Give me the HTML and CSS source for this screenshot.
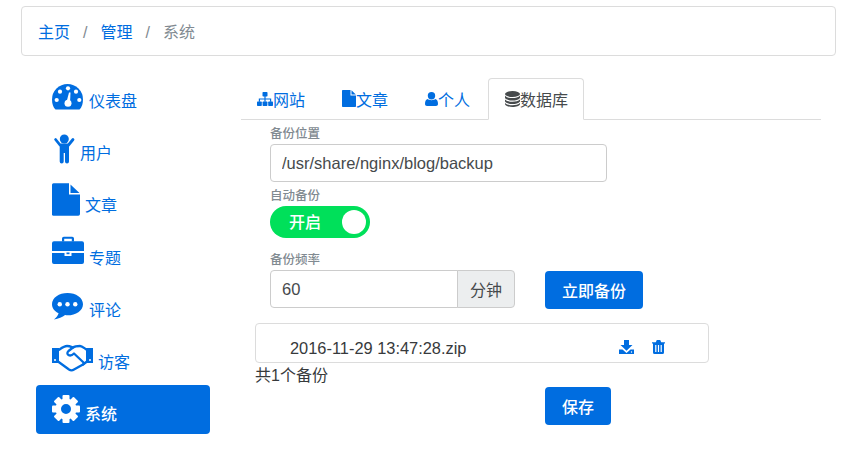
FILE: index.html
```html
<!DOCTYPE html>
<html lang="zh-CN">
<head>
<meta charset="utf-8">
<title>系统</title>
<link rel="stylesheet" href="styles.css">
</head>
<body>
<nav class="crumbs">
  <a href="#">主页</a><span class="sep">/</span><a href="#">管理</a><span class="sep">/</span><span class="current">系统</span>
</nav>
<div class="layout">
  <ul class="side">
    <li><a class="side-link" href="#">
      <svg class="ico w31" viewBox="0 0 31 36"><path d="M3.5 33.500C1.200 31.500 0 27.500 0 23.500A15.500 15.500 0 0 1 31 23.500C31 27.500 29.800 31.500 27.500 33.500Z"/><g fill="#fff"><circle cx="4.700" cy="24" r="2.100"/><circle cx="8" cy="15.700" r="2.100"/><circle cx="16" cy="12.300" r="2.100"/><circle cx="24" cy="15.700" r="2.100"/><circle cx="27.300" cy="24" r="2.100"/><circle cx="16" cy="27.300" r="3.500"/><path d="M14.400 26.500L17 16.500H18.500L18 27Z"/></g></svg>
      <span>仪表盘</span></a></li>
    <li><a class="side-link" href="#">
      <svg class="ico w22" viewBox="0 0 22 36"><circle cx="11.300" cy="11" r="4.500"/><path d="M2.600 11.500L7 17H15.500L20 11.500" fill="none" stroke="#006de0" stroke-width="2.800" stroke-linecap="round" stroke-linejoin="round"/><path d="M6.700 16H16V33.500A2 2 0 0 1 12 33.500V25H10.700V33.500A2 2 0 0 1 6.700 33.500Z"/></svg>
      <span>用户</span></a></li>
    <li><a class="side-link" href="#">
      <svg class="ico w28" viewBox="0 0 28 36"><path d="M1.500 3.300H17V14.500H28V34A1.700 1.700 0 0 1 26.300 35.700H1.500A1.500 1.500 0 0 1 0 34V4.800A1.500 1.500 0 0 1 1.500 3.300Z"/><path d="M18.500 4.500L27.500 13H18.500Z"/></svg>
      <span>文章</span></a></li>
    <li><a class="side-link" href="#">
      <svg class="ico w32" viewBox="0 0 32 36"><path d="M10 9.500V6.500A1.800 1.800 0 0 1 11.800 4.700H20.200A1.800 1.800 0 0 1 22 6.500V9.500H19.800V6.800H12.200V9.500Z"/><path d="M2 9.300H30A2 2 0 0 1 32 11.300V19H0V11.300A2 2 0 0 1 2 9.300Z"/><path d="M0 21H12.500V24H19.500V21H32V30A2 2 0 0 1 30 32H2A2 2 0 0 1 0 30Z"/><rect x="14.500" y="20.500" width="3" height="1.700"/></svg>
      <span>专题</span></a></li>
    <li><a class="side-link" href="#">
      <svg class="ico w31" viewBox="0 0 32 36"><path d="M16 8.700C7.300 8.700 0 13.700 0 20.300C0 24.300 2.500 27.500 6.800 29.500C6.300 31.700 4.500 34 2 36C6.500 35.500 11 33.500 13.500 31.500C14.300 31.700 15.200 31.800 16 31.800C24.700 31.800 32 26.800 32 20.300C32 13.700 24.700 8.700 16 8.700Z"/><g fill="#fff"><circle cx="8" cy="20.300" r="2.300"/><circle cx="16" cy="20.300" r="2.300"/><circle cx="24" cy="20.300" r="2.300"/></g></svg>
      <span>评论</span></a></li>
    <li><a class="side-link" href="#">
      <svg class="ico w41" viewBox="0 0 41 36"><rect x="0" y="12" width="7" height="15"/><rect x="34" y="12" width="7" height="15"/><circle cx="3" cy="24" r="1" fill="#fff"/><circle cx="38" cy="24" r="1" fill="#fff"/><g fill="none" stroke="#006de0" stroke-width="2.300" stroke-linejoin="round" stroke-linecap="round"><path d="M6 14.500C9 12.500 12 10 15 10C18 10 19.500 11 21 11.500C23 10 25.500 10 28 10C30 10 32 12 35 14"/><path d="M6 25.500L17 33.500C18.500 34.500 20.500 34.500 22 33.500L31 28.500L35 25.500"/><path d="M21 11.500L16.500 15C15 16.500 15 18 16.500 19C18 20 20 19.500 22 17.500L31 26C32 27 32 28 31 28.500"/></g></svg>
      <span>访客</span></a></li>
    <li><a class="side-link active" href="#">
      <svg class="ico w28 ico-white" viewBox="0 0 28 36"><path fill-rule="evenodd" d="M14 10.500A10.500 10.500 0 1 0 14 31.500A10.500 10.500 0 1 0 14 10.500ZM14 16A5 5 0 1 1 14 26A5 5 0 1 1 14 16Z"/><rect x="10.500" y="7" width="7" height="6" rx="1"/><rect x="10.500" y="29" width="7" height="6" rx="1"/><rect x="0" y="17.500" width="6" height="7" rx="1"/><rect x="22" y="17.500" width="6" height="7" rx="1"/><rect x="10.500" y="7" width="7" height="6" rx="1" transform="rotate(45 14 21)"/><rect x="10.500" y="7" width="7" height="6" rx="1" transform="rotate(135 14 21)"/><rect x="10.500" y="7" width="7" height="6" rx="1" transform="rotate(225 14 21)"/><rect x="10.500" y="7" width="7" height="6" rx="1" transform="rotate(315 14 21)"/></svg>
      <span>系统</span></a></li>
  </ul>
  <main class="content">
    <ul class="tabs">
      <li><a class="tab" href="#">
        <svg class="tab-ico w16" viewBox="0 0 16 16"><rect x="5.500" y="1" width="5" height="4.500" rx=".7"/><rect x="0" y="10.500" width="4.800" height="4.500" rx=".7"/><rect x="5.600" y="10.500" width="4.800" height="4.500" rx=".7"/><rect x="11.200" y="10.500" width="4.800" height="4.500" rx=".7"/><path d="M7.400 5H8.600V7.500H14.200V10.700H13V8.600H8.600V10.700H7.400V8.600H3V10.700H1.800V7.500H7.400Z"/></svg>网站</a></li>
      <li><a class="tab" href="#">
        <svg class="tab-ico w14" viewBox="0 0 14 17"><path d="M.8 0H8.500V5.500H14V16.200A.8.8 0 0 1 13.200 17H.8A.8.8 0 0 1 0 16.200V.8A.8.8 0 0 1 .8 0Z"/><path d="M9.500.3L13.800 4.500H9.500Z"/></svg>文章</a></li>
      <li class="tab-tight"><a class="tab" href="#">
        <svg class="tab-ico w13" viewBox="0 0 13 14"><circle cx="6.500" cy="3.700" r="3.700"/><path d="M2.500 7C4 8.500 9 8.500 10.500 7C12.300 7.500 13 9.500 13 12C13 13.200 12.200 14 11 14H2C.8 14 0 13.200 0 12C0 9.500 .7 7.500 2.500 7Z"/></svg>个人</a></li>
      <li><a class="tab tab-on" href="#">
        <svg class="tab-ico w15 ico-dark" viewBox="0 0 15 16"><ellipse cx="7.500" cy="3" rx="7.500" ry="3"/><path d="M0 4.700C1.500 6.500 4.500 7 7.500 7S13.500 6.500 15 4.700V7C13.500 9 10.500 9.500 7.500 9.500S1.500 9 0 7Z"/><path d="M0 8.500C1.500 10.200 4.500 10.700 7.500 10.700S13.500 10.200 15 8.500V10.500C13.500 12.500 10.500 13 7.500 13S1.500 12.500 0 10.500Z"/><path d="M0 12C1.500 13.700 4.500 14.200 7.500 14.200S13.500 13.700 15 12V13C15 14.800 11 16 7.500 16S0 14.800 0 13Z"/></svg>数据库</a></li>
    </ul>
    <form class="form">
      <div class="fields">
        <label class="lbl">备份位置</label>
        <input class="inp inp-path" type="text" value="/usr/share/nginx/blog/backup">
        <label class="lbl lbl-auto">自动备份</label>
        <div class="switch"><span class="switch-text">开启</span><span class="knob"></span></div>
        <label class="lbl lbl-freq">备份频率</label>
        <div class="freq">
          <div class="group"><input class="inp inp-num" type="text" value="60"><span class="addon">分钟</span></div>
          <button class="btn btn-now" type="button">立即备份</button>
        </div>
      </div>
      <div class="files">
        <span class="fname">2016-11-29 13:47:28.zip</span>
        <span class="file-actions">
          <svg class="act-dl" viewBox="0 0 15 14"><path d="M5 0H10V5H13.500L7.500 10.800L1.500 5H5Z"/><path d="M0 9.500H3.500L7.500 13L11.500 9.500H15V14H0Z"/><circle cx="12.500" cy="12" r=".7" fill="#fff"/></svg>
          <svg class="act-rm" viewBox="0 0 13 14"><path fill-rule="evenodd" d="M0 2.200H3.800L4.800 0H8.200L9.200 2.200H13V3.500H12V12.500A1.500 1.500 0 0 1 10.500 14H2.500A1.500 1.500 0 0 1 1 12.500V3.500H0ZM3.200 5V12H4.400V5ZM5.900 5V12H7.100V5ZM8.600 5V12H9.800V5Z"/></svg>
        </span>
      </div>
      <div class="count">共1个备份</div>
      <button class="btn btn-save" type="button">保存</button>
    </form>
  </main>
</div>
</body>
</html>
```
FILE: styles.css
```css
* { box-sizing: border-box; }
html, body { margin: 0; padding: 0; background: #fff; }
body {
  font-family: "Liberation Sans", "Noto Sans CJK SC", sans-serif;
  font-size: 16px;
  color: #373a3c;
}
a { color: #006de0; text-decoration: none; }
ul { list-style: none; margin: 0; padding: 0; }
svg { fill: #006de0; flex: none; display: block; }
.ico-white { fill: #fff; }
.ico-dark { fill: #464a4c; }

.crumbs {
  margin: 6px 23px 0 21px;
  height: 50px;
  padding: 0 16px;
  border: 1px solid #dcdcdc;
  border-radius: 4px;
  display: flex;
  align-items: center;
}
.sep { color: #818a91; padding: 4px 13px 0; }
.current { color: #818a91; }

.layout { display: flex; align-items: flex-start; margin: 17px 38px 0 36px; }
.side { width: 174px; flex: none; display: flex; flex-direction: column; gap: 3px; }
.side-link {
  display: flex;
  align-items: flex-end;
  height: 49px;
  padding: 0 16px 10px;
  border-radius: 4px;
  line-height: 20px;
}
.side li:nth-child(n+4) span { margin-bottom: -1px; }
.side-link.active { background: #006de0; color: #fff; font-weight: 500; }
.ico { height: 36px; margin-right: 5px; }
.w22 { width: 22px; margin-left: 1px; margin-right: 5px; }
.w28 { width: 28px; }
.w31 { width: 31px; margin-right: 6px; }
.w32 { width: 32px; }
.w41 { width: 41px; margin-right: 5px; }

.content { margin-left: 31px; flex: 1; margin-top: 5px; }
.tabs { display: flex; gap: 5px; height: 42px; border-bottom: 1px solid #dcdcdc; }
.tab {
  display: flex;
  align-items: center;
  height: 42px;
  padding: 0 15px 1px;
  border: 1px solid transparent;
  border-radius: 4px 4px 0 0;
}
.tab-tight { margin-right: -3px; }
.tab-on { color: #464a4c; background: #fff; border-color: #dcdcdc #dcdcdc #fff; padding: 0 15px 1px 16px; }
.w16 { width: 16px; height: 16px; }
.w14 { width: 14px; height: 17px; }
.w13 { width: 13px; height: 14px; }
.w15 { width: 15px; height: 16px; }

.form { margin-left: 14px; display: flex; flex-direction: column; align-items: flex-start; }
.fields { padding: 5px 0 0 15px; display: flex; flex-direction: column; align-items: flex-start; }
.lbl { display: block; font-size: 12.5px; font-weight: 500; line-height: 16px; padding-top: 1px; height: 16px; margin-bottom: 3px; color: #818a91; }
.lbl-auto { margin-top: 5px; }
.lbl-freq { margin-top: 13px; }
.inp {
  height: 38px;
  font: inherit;
  font-size: 16.5px;
  color: #464a4c;
  border: 1px solid #cccccc;
  padding: 1px 11px 0;
  background: #fff;
  outline: none;
}
.inp-path { width: 337px; border-radius: 4px; }
.switch {
  width: 100px;
  height: 32px;
  border-radius: 16px;
  background: #00e05a;
  display: flex;
  align-items: center;
  justify-content: space-between;
  padding: 0 4px 0 19px;
  color: #fff;
  font-weight: 500;
}
.switch-text { margin-top: -3px; }
.knob { width: 24px; height: 24px; border-radius: 50%; background: #fff; }
.freq { display: flex; align-items: flex-start; gap: 30px; }
.group { display: flex; width: 245px; }
.inp-num { width: 188px; border-radius: 4px 0 0 4px; }
.addon {
  width: 58px;
  margin-left: -1px;
  height: 38px;
  display: flex;
  align-items: center;
  justify-content: center;
  background: #eceeef;
  color: #464a4c;
  border: 1px solid #cccccc;
  border-radius: 0 4px 4px 0;
}
.btn {
  height: 38px;
  border: 0;
  border-radius: 4px;
  background: #006de0;
  color: #fff;
  font: inherit;
  font-weight: 500;
  padding: 0;
}
.btn-now { width: 98px; margin-top: 1px; }
.files {
  width: 454px;
  height: 40px;
  margin-top: 14px;
  padding: 10px 43px 0 34px;
  border: 1px solid #dcdcdc;
  border-radius: 4px;
  display: flex;
  align-items: center;
  justify-content: space-between;
  color: #373a3c;
}
.fname { font-size: 16.4px; }
.file-actions { display: flex; align-items: center; gap: 18px; margin-top: -3px; }
.act-dl { width: 15px; height: 14px; }
.act-rm { width: 13px; height: 14px; }
.count { line-height: 26px; height: 24px; }
.btn-save { width: 66px; margin-left: 290px; }
```
